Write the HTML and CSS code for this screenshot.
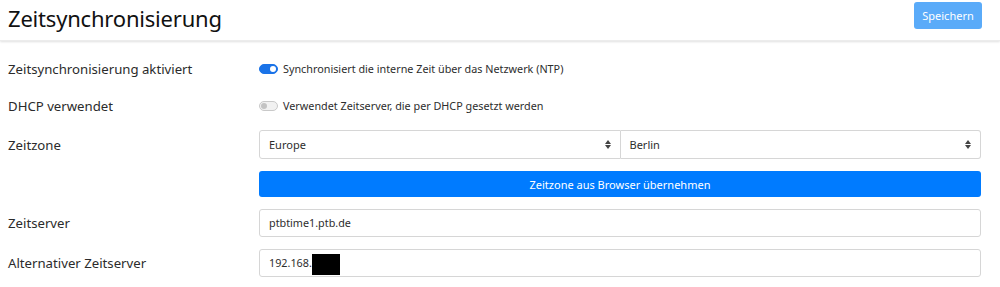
FILE: index.html
```html
<!DOCTYPE html>
<html lang="de">

<head>
  <meta charset="UTF-8">
  <meta name="viewport" content="width=device-width, initial-scale=1.0">
  <title>Zeitsynchronisierung</title>
  <link rel="stylesheet" href="styles.css">
</head>

<body>
  <div class="header">
    <h1>Zeitsynchronisierung</h1>
    <button class="save-btn" disabled>Speichern</button>
  </div>

  <form class="settings">
    <div class="row row-ntp">
      <label class="row-label">Zeitsynchronisierung aktiviert</label>
      <div class="row-control">
        <span class="switch on"></span>
        <span class="switch-text">Synchronisiert die interne Zeit über das Netzwerk (NTP)</span>
      </div>
    </div>

    <div class="row row-dhcp">
      <label class="row-label">DHCP verwendet</label>
      <div class="row-control">
        <span class="switch"></span>
        <span class="switch-text">Verwendet Zeitserver, die per DHCP gesetzt werden</span>
      </div>
    </div>

    <div class="row row-zone">
      <label class="row-label">Zeitzone</label>
      <div class="row-control selects">
        <div class="select">Europe<span class="arrows"></span></div>
        <div class="select">Berlin<span class="arrows"></span></div>
      </div>
    </div>

    <div class="row row-browser">
      <span class="row-label"></span>
      <div class="row-control">
        <button type="button" class="primary-btn">Zeitzone aus Browser übernehmen</button>
      </div>
    </div>

    <div class="row row-input">
      <label class="row-label">Zeitserver</label>
      <div class="row-control">
        <div class="input">ptbtime1.ptb.de</div>
      </div>
    </div>

    <div class="row row-input">
      <label class="row-label">Alternativer Zeitserver</label>
      <div class="row-control">
        <div class="input">192.168.<span class="redacted"></span></div>
      </div>
    </div>
  </form>
</body>

</html>
```

FILE: styles.css
```css
body {
  margin: 0;
  padding: 0;
  background-color: #fff;
  color: #212529;
  font-family: "Noto Sans", "Open Sans", sans-serif;
}

.header {
  height: 40px;
  display: flex;
  align-items: flex-start;
  justify-content: space-between;
  padding: 0 18px 0 8px;
  box-shadow: 0 1px 2px rgba(0, 0, 0, 0.12);
  border-bottom: 1px solid #ececec;
}

.header h1 {
  margin: 0;
  margin-top: 3px;
  font-size: 22px;
  font-weight: 400;
  letter-spacing: -0.2px;
  line-height: 30px;
  color: #111;
}

.save-btn {
  margin-top: 2px;
  width: 68px;
  height: 27px;
  padding: 0;
  border: 0;
  border-radius: 3px;
  background-color: #5aabf9;
  color: #fff;
  font-family: inherit;
  font-size: 11px;
}

.settings {
  padding: 13px 19px 0 8px;
}

.row {
  display: flex;
  align-items: center;
  margin-bottom: 12px;
}

.row-label {
  width: 251px;
  flex-shrink: 0;
  font-size: 13.2px;
  color: #2b2b2b;
}

.row-control {
  flex: 1;
  display: flex;
  align-items: center;
}

.row-ntp {
  height: 29px;
  margin-bottom: 8px;
}

.row-dhcp {
  height: 29px;
  margin-bottom: 10px;
}

.switch {
  position: relative;
  width: 17px;
  height: 8px;
  border-radius: 5px;
  border: 1px solid #c9c9c9;
  background-color: #f1f1f1;
  margin-right: 5px;
}

.switch::after {
  content: "";
  position: absolute;
  top: 1px;
  left: 1px;
  width: 6px;
  height: 6px;
  border-radius: 50%;
  background-color: #c3c3c3;
}

.switch.on {
  border-color: #1a73e8;
  background-color: #1a73e8;
}

.switch.on::after {
  left: auto;
  right: 1px;
  background-color: #fff;
}

.switch-text {
  font-size: 10.8px;
  color: #2d2d2d;
}

.selects {
  display: flex;
}

.select {
  position: relative;
  flex: 1;
  height: 27px;
  line-height: 27px;
  padding-left: 9px;
  border: 1px solid #d6d6d6;
  border-radius: 3px;
  font-size: 11px;
  color: #2d2d2d;
}

.select:first-child {
  border-top-right-radius: 0;
  border-bottom-right-radius: 0;
}

.select:last-child {
  border-left: 0;
  border-top-left-radius: 0;
  border-bottom-left-radius: 0;
}

.arrows {
  position: absolute;
  right: 8px;
  top: 9px;
  width: 7px;
  height: 9px;
}

.arrows::before,
.arrows::after {
  content: "";
  position: absolute;
  left: 0;
  border-left: 3.5px solid transparent;
  border-right: 3.5px solid transparent;
}

.arrows::before {
  top: 0;
  border-bottom: 4px solid #444;
}

.arrows::after {
  bottom: 0;
  border-top: 4px solid #444;
}

.primary-btn {
  width: 100%;
  height: 26px;
  padding: 0;
  border: 0;
  border-radius: 3px;
  background-color: #007bff;
  color: #fff;
  font-family: inherit;
  font-size: 11px;
}

.input {
  flex: 1;
  height: 26px;
  line-height: 26px;
  padding-left: 9px;
  border: 1px solid #d6d6d6;
  border-radius: 3px;
  font-size: 10.8px;
  color: #2d2d2d;
}

.redacted {
  display: inline-block;
  width: 28px;
  height: 21px;
  vertical-align: middle;
  background-color: #000;
}
```
